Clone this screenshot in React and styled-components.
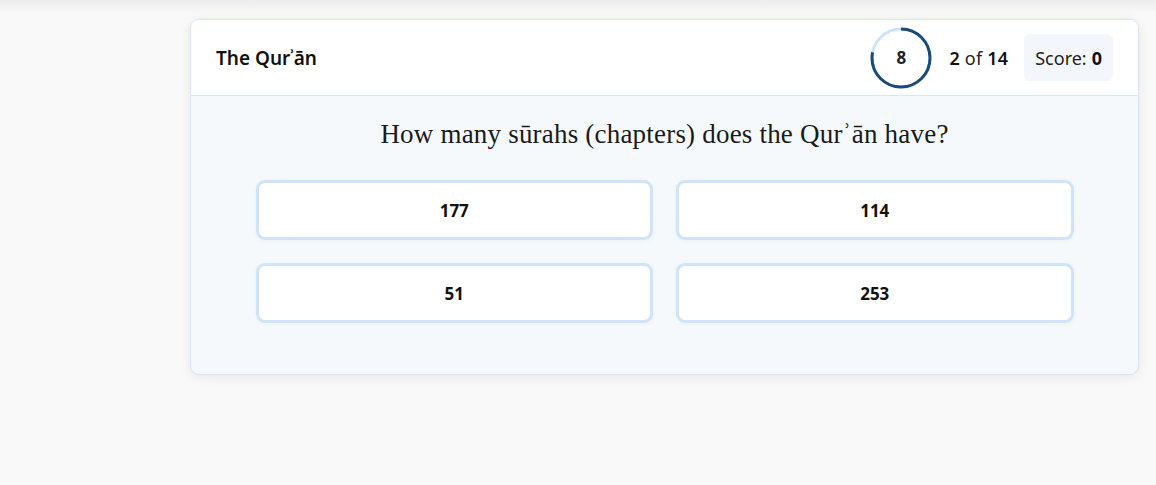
import React from "react";
import styled, { createGlobalStyle } from "styled-components";

const GlobalStyle = createGlobalStyle`
  html, body {
    margin: 0;
    padding: 0;
  }
  body {
    background: linear-gradient(to bottom, #ececec 0px, #f9f9f9 14px) #f9f9f9;
    font-family: "Noto Sans", "Open Sans", sans-serif;
    color: #111;
  }
`;

const Page = styled.div`
  display: grid;
  grid-template-columns: 190px 1fr;
  padding: 19px 17px 40px 0;
  min-height: 485px;
  box-sizing: border-box;
`;

const Card = styled.section`
  grid-column: 2;
  background: #f5f9fc;
  border: 1px solid #d5e6f8;
  border-radius: 9px;
  box-shadow: 0 2px 12px rgba(0, 0, 0, 0.08);
  overflow: hidden;
  align-self: start;
`;

const Header = styled.header`
  display: flex;
  align-items: center;
  justify-content: space-between;
  height: 75px;
  padding: 0 25px;
  background: #fff;
  border-bottom: 1px solid #d5e6f8;
`;

const Title = styled.h1`
  margin: 0;
  font-size: 19px;
  font-weight: 600;
  color: #111;
`;

const Status = styled.div`
  display: flex;
  align-items: center;
  gap: 16px;
`;

const Timer = styled.div`
  position: relative;
  width: 62px;
  height: 62px;
  margin-right: 1px;
  display: flex;
  align-items: center;
  justify-content: center;
  svg {
    position: absolute;
    inset: 0;
  }
`;

const TimerValue = styled.span`
  font-size: 17px;
  font-weight: 700;
  color: #222;
`;

const Count = styled.div`
  font-size: 18px;
  letter-spacing: 0.2px;
  color: #222;
  b {
    font-weight: 600;
    color: #111;
  }
`;

const Score = styled.div`
  background: #f3f7fb;
  border-radius: 6px;
  padding: 0 11px;
  height: 47px;
  display: flex;
  align-items: center;
  font-size: 18px;
  color: #222;
  b {
    font-weight: 700;
    margin-left: 5px;
    color: #111;
  }
`;

const Body = styled.div`
  padding: 21px 0 51px;
`;

const Question = styled.h2`
  margin: 0 0 29px;
  text-align: center;
  font-family: "Liberation Serif", "Times New Roman", serif;
  font-weight: 400;
  font-size: 27px;
  letter-spacing: 0.2px;
  line-height: 34px;
  color: #1a1a1a;
`;

const Options = styled.div`
  display: grid;
  grid-template-columns: 1fr 1fr;
  gap: 23px;
  width: 818px;
  margin: 0 auto;
`;

const Option = styled.button`
  height: 60px;
  box-sizing: border-box;
  background: #fff;
  border: 3px solid #d0e3f8;
  border-radius: 9px;
  box-shadow: 0 1px 4px rgba(30, 70, 120, 0.05);
  font-family: "Noto Sans", "Open Sans", sans-serif;
  font-size: 17px;
  font-weight: 700;
  color: #111;
  cursor: pointer;
`;

function TimerRing({ fraction }) {
  const r = 29;
  const c = 2 * Math.PI * r;
  return (
    <svg width="62" height="62" viewBox="0 0 62 62">
      <circle cx="31" cy="31" r={r} fill="none" stroke="#cfe3f8" strokeWidth="3" />
      <circle
        cx="31"
        cy="31"
        r={r}
        fill="none"
        stroke="#1b4a78"
        strokeWidth="3"
        strokeDasharray={`${c * fraction} ${c}`}
        transform="rotate(-90 31 31)"
      />
    </svg>
  );
}

const answers = ["177", "114", "51", "253"];

export default function App() {
  return (
    <>
      <GlobalStyle />
      <Page>
        <Card>
          <Header>
            <Title>The Qurʾān</Title>
            <Status>
              <Timer>
                <TimerRing fraction={0.78} />
                <TimerValue>8</TimerValue>
              </Timer>
              <Count>
                <b>2</b> of <b>14</b>
              </Count>
              <Score>
                Score:<b>0</b>
              </Score>
            </Status>
          </Header>
          <Body>
            <Question>How many sūrahs (chapters) does the Qurʾān have?</Question>
            <Options>
              {answers.map((a) => (
                <Option key={a}>{a}</Option>
              ))}
            </Options>
          </Body>
        </Card>
      </Page>
    </>
  );
}
